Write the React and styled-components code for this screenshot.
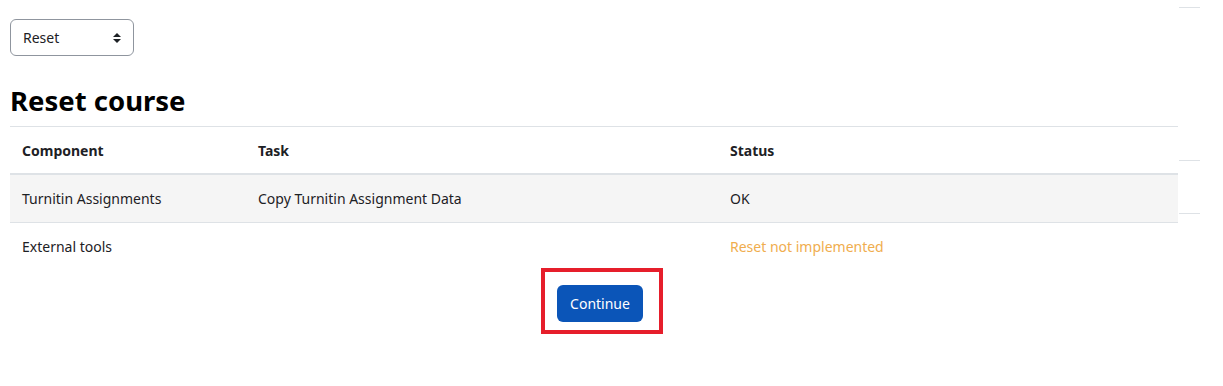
import React from "react";
import styled, { createGlobalStyle } from "styled-components";

const Global = createGlobalStyle`
  html, body { margin: 0; padding: 0; background: #fff; }
  body {
    font-family: "Noto Sans", "Open Sans", "Liberation Sans", sans-serif;
    color: #1d2125;
    font-size: 14px;
  }
`;

const Page = styled.div`
  width: 1200px;
  display: flex;
  flex-direction: column;
`;

const Top = styled.div`
  display: flex;
  align-items: flex-start;
`;

const Main = styled.div`
  width: 1168px;
  padding-left: 10px;
  display: flex;
  flex-direction: column;
  align-items: flex-start;
`;

const Aside = styled.div`
  width: 21px;
  margin-left: 1px;
  display: flex;
  flex-direction: column;
`;

const Rule = styled.div`
  height: 1px;
  background: #dee2e6;
  margin-top: ${(p) => p.$gap}px;
`;

const SelectBox = styled.div`
  margin-top: 19px;
  width: 124px;
  height: 37px;
  box-sizing: border-box;
  border: 1px solid #8f959e;
  border-radius: 6px;
  display: flex;
  align-items: center;
  justify-content: space-between;
  padding: 0 11px 0 12px;
  font-size: 14px;
  color: #1d2125;
`;

const Heading = styled.h2`
  margin: 28px 0 8px;
  font-size: 27.5px;
  font-weight: 700;
  line-height: 34px;
  color: #000;
`;

const Table = styled.table`
  width: 1168px;
  border-collapse: collapse;
  table-layout: fixed;
  border-top: 1px solid #dee2e6;
`;

const Th = styled.th`
  text-align: left;
  font-weight: 700;
  padding: 13px 12px 11px;
  line-height: 22px;
  width: ${(p) => p.$w || "auto"};
  border-bottom: 2px solid #dee2e6;
`;

const Tr = styled.tr`
  background: ${(p) => (p.$striped ? "#f5f5f5" : "#fff")};
  border-bottom: ${(p) => (p.$last ? "none" : "1px solid #dee2e6")};
`;

const Td = styled.td`
  padding: 12px;
  line-height: 23px;
  color: ${(p) => (p.$warn ? "#f0ad4e" : "#1d2125")};
`;

const Actions = styled.div`
  display: flex;
  justify-content: center;
  margin-top: -2px;
  padding-left: 4px;
`;

const Highlight = styled.div`
  border: 4px solid #e61e2b;
  padding: 13px 16px 8px 12px;
`;

const Button = styled.button`
  display: block;
  font-family: inherit;
  font-size: 14px;
  color: #fff;
  background: #0b55b8;
  border: none;
  border-radius: 6px;
  height: 37px;
  width: 86px;
  padding: 0 0 1px;
  cursor: pointer;
`;

const Caret = () => (
  <svg width="10" height="14" viewBox="0 0 10 14">
    <path d="M1 6 L5 2 L9 6 Z" fill="#1d2125" />
    <path d="M1 8 L5 12 L9 8 Z" fill="#1d2125" />
  </svg>
);

export default function App() {
  return (
    <Page>
      <Global />
      <Top>
        <Main>
          <SelectBox>
            <span>Reset</span>
            <Caret />
          </SelectBox>
          <Heading>Reset course</Heading>
          <Table>
            <thead>
              <tr>
                <Th $w="212px">Component</Th>
                <Th $w="448px">Task</Th>
                <Th>Status</Th>
              </tr>
            </thead>
            <tbody>
              <Tr $striped>
                <Td>Turnitin Assignments</Td>
                <Td>Copy Turnitin Assignment Data</Td>
                <Td>OK</Td>
              </Tr>
              <Tr $last>
                <Td>External tools</Td>
                <Td></Td>
                <Td $warn>Reset not implemented</Td>
              </Tr>
            </tbody>
          </Table>
        </Main>
        <Aside>
          <Rule $gap={7} />
          <Rule $gap={152} />
          <Rule $gap={52} />
        </Aside>
      </Top>
      <Actions>
        <Highlight>
          <Button>Continue</Button>
        </Highlight>
      </Actions>
    </Page>
  );
}
